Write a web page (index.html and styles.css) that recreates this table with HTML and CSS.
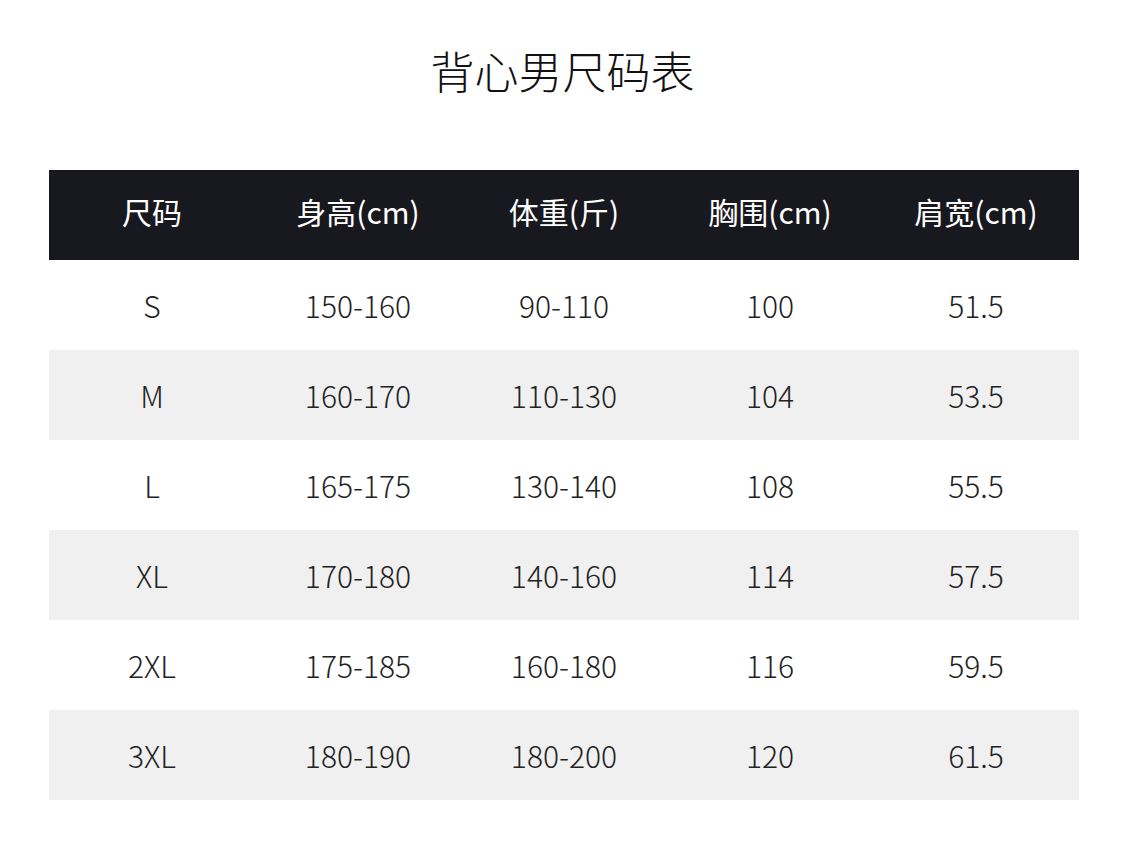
FILE: index.html
```html
<!DOCTYPE html>
<html lang="zh">
<head>
<meta charset="utf-8">
<link rel="stylesheet" href="styles.css">
</head>
<body>
<div class="page">
  <h1 class="title">背心男尺码表</h1>
  <div class="table">
    <div class="row head">
      <div class="cell">尺码</div>
      <div class="cell">身高(cm)</div>
      <div class="cell">体重(斤)</div>
      <div class="cell">胸围(cm)</div>
      <div class="cell">肩宽(cm)</div>
    </div>
    <div class="row">
      <div class="cell">S</div><div class="cell">150-160</div><div class="cell">90-110</div><div class="cell">100</div><div class="cell">51.5</div>
    </div>
    <div class="row alt">
      <div class="cell">M</div><div class="cell">160-170</div><div class="cell">110-130</div><div class="cell">104</div><div class="cell">53.5</div>
    </div>
    <div class="row">
      <div class="cell">L</div><div class="cell">165-175</div><div class="cell">130-140</div><div class="cell">108</div><div class="cell">55.5</div>
    </div>
    <div class="row alt">
      <div class="cell">XL</div><div class="cell">170-180</div><div class="cell">140-160</div><div class="cell">114</div><div class="cell">57.5</div>
    </div>
    <div class="row">
      <div class="cell">2XL</div><div class="cell">175-185</div><div class="cell">160-180</div><div class="cell">116</div><div class="cell">59.5</div>
    </div>
    <div class="row alt">
      <div class="cell">3XL</div><div class="cell">180-190</div><div class="cell">180-200</div><div class="cell">120</div><div class="cell">61.5</div>
    </div>
  </div>
</div>
</body>
</html>
```
FILE: styles.css
```css
html, body {
  margin: 0;
  padding: 0;
  background: #fff;
}
body {
  font-family: "Noto Sans CJK SC", "Noto Sans", sans-serif;
  color: #222;
}
.page {
  width: 1125px;
  padding-top: 42px;
}
.title {
  margin: 0;
  height: 56px;
  line-height: 56px;
  text-align: center;
  font-size: 44px;
  font-weight: 300;
  color: #111;
}
.table {
  margin: 72px 0 0 49px;
  width: 1030px;
}
.row {
  display: grid;
  grid-template-columns: repeat(5, 1fr);
  height: 90px;
  align-items: center;
  background: #fff;
}
.row.alt {
  background: #f0f0f0;
}
.row.head {
  background: #18181f;
  color: #fff;
  padding-bottom: 8px;
  height: 82px;
}
.row.head .cell {
  font-weight: 400;
}
.cell {
  text-align: center;
  font-size: 30px;
  line-height: 40px;
  font-weight: 300;
}
```
